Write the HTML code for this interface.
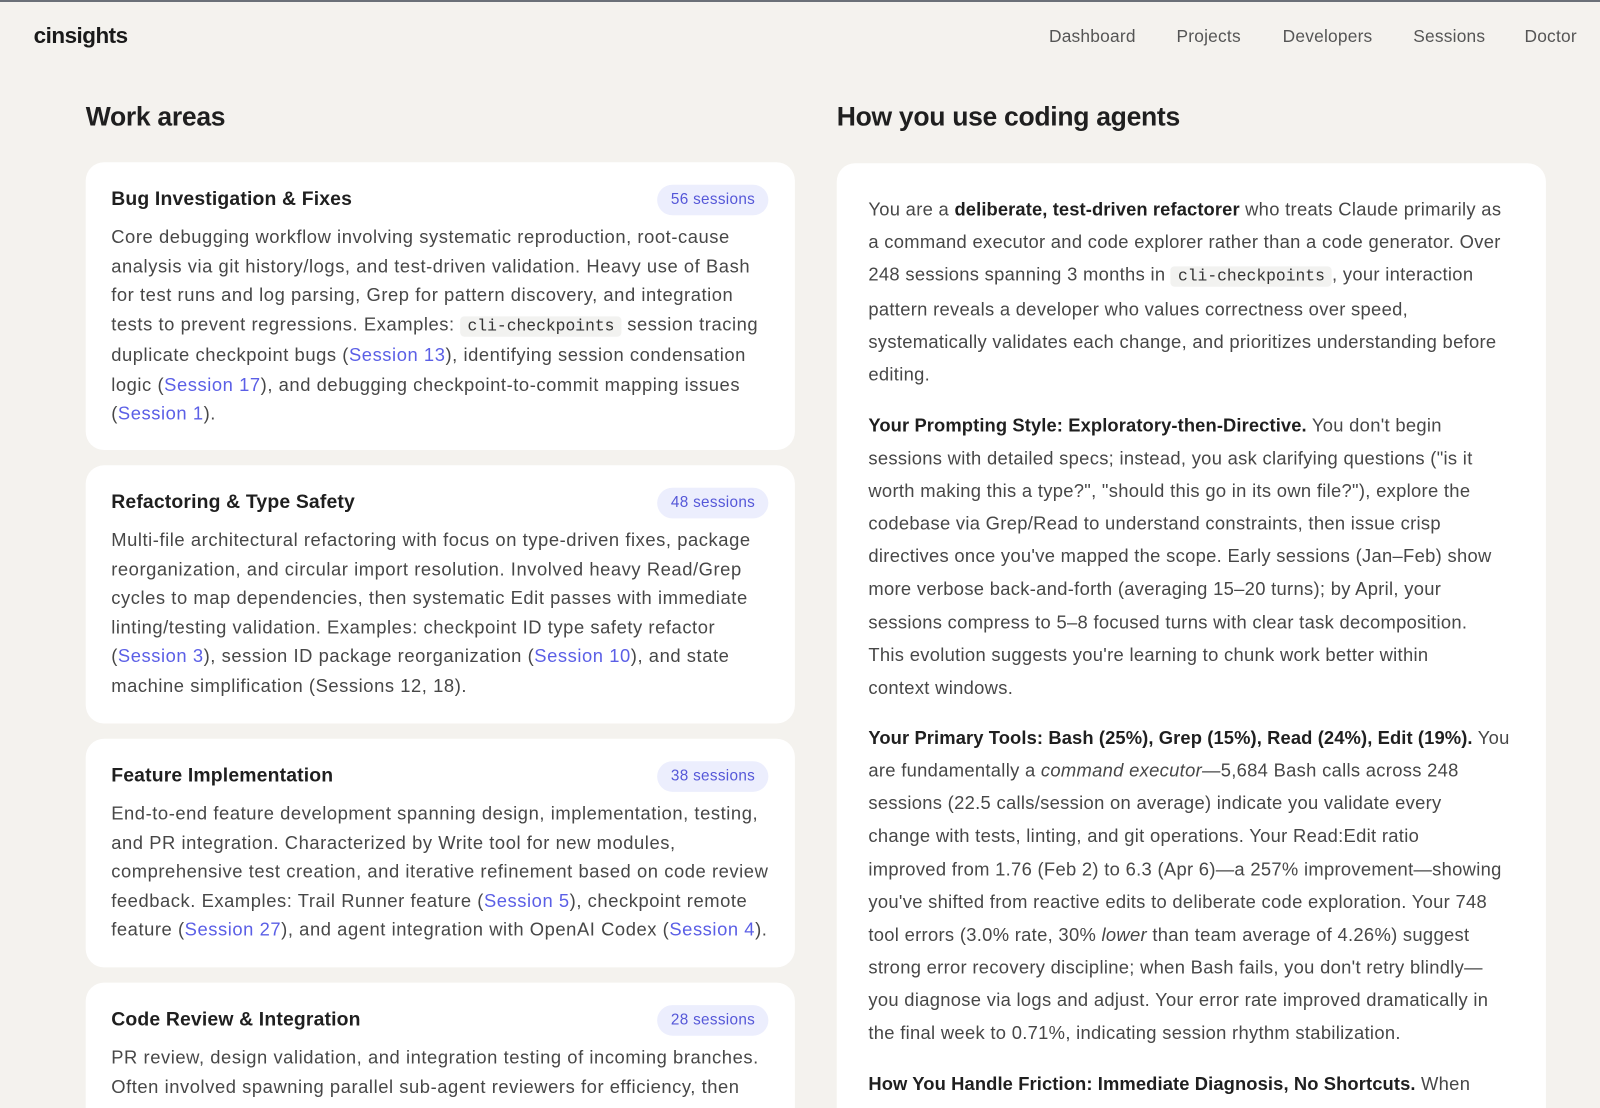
<!DOCTYPE html>
<html><head><meta charset="utf-8"><style>
*{box-sizing:border-box;margin:0;padding:0}
html,body{width:1600px;height:1108px;overflow:hidden}
body{background:#f4f2ee;font-family:"Liberation Sans",sans-serif;color:#1f1f1f;position:relative}
#bar{position:absolute;left:0;top:0;width:1600px;height:2px;background:#6b7078;z-index:2}
#w{position:absolute;left:0;top:0;width:1568px;height:1086px;overflow:hidden;transform:scale(1.0204);transform-origin:0 0}
.logo{position:absolute;left:33px;top:22px;font-size:22px;font-weight:bold;letter-spacing:-0.5px;color:#1a1a1a}
.nav{position:absolute;top:26px;font-size:17px;color:#555;letter-spacing:0.2px}
h2{position:absolute;font-size:26px;font-weight:bold;letter-spacing:-0.3px;color:#1f1f1f}
.card{position:absolute;background:#fff;border-radius:18px;left:84px;width:695px;padding:0 25px}
.card h3{position:absolute;left:25px;font-size:19px;font-weight:bold;color:#1f1f1f;letter-spacing:0.15px}
.badge{position:absolute;right:26px;height:30px;line-height:30px;padding:0 13px;border-radius:15px;background:#eceefd;color:#5557d8;font-size:15px;letter-spacing:0.3px}
.txt{position:absolute;left:25px;font-size:18px;line-height:28.5px;color:#474747;white-space:nowrap;letter-spacing:0.55px}
a{color:#5b5fe6;text-decoration:none}
code{font-family:"Liberation Mono",monospace;font-size:16px;background:#f2f2f0;border-radius:4px;padding:1px 7px;color:#333;letter-spacing:0}
.right{position:absolute;left:820px;top:160px;width:695px;height:960px;background:#fff;border-radius:18px}
.rt{position:absolute;left:31px;top:29px;font-size:18px;line-height:32.1px;color:#474747;white-space:nowrap;letter-spacing:0.3px}
.rt p{margin-bottom:17.4px}
.rt b{color:#1f1f1f;letter-spacing:0.1px}
</style></head><body><div id="bar"></div><div id="w">
<div class="logo">cinsights</div>
<div class="nav" style="left:1028px">Dashboard</div>
<div class="nav" style="left:1153px">Projects</div>
<div class="nav" style="left:1257px">Developers</div>
<div class="nav" style="left:1385px">Sessions</div>
<div class="nav" style="left:1494px">Doctor</div>

<h2 style="left:84px;top:99px">Work areas</h2>
<h2 style="left:820px;top:99px">How you use coding agents</h2>

<div class="card" style="top:159px;height:282px">
<h3 style="top:26px">Bug Investigation &amp; Fixes</h3><div class="badge" style="top:22px">56 sessions</div>
<div class="txt" style="top:59px">Core debugging workflow involving systematic reproduction, root-cause<br>analysis via git history/logs, and test-driven validation. Heavy use of Bash<br>for test runs and log parsing, Grep for pattern discovery, and integration<br>tests to prevent regressions. Examples: <code>cli-checkpoints</code> session tracing<br>duplicate checkpoint bugs (<a>Session 13</a>), identifying session condensation<br>logic (<a>Session 17</a>), and debugging checkpoint-to-commit mapping issues<br>(<a>Session 1</a>).</div>
</div>

<div class="card" style="top:456px;height:253px">
<h3 style="top:26px">Refactoring &amp; Type Safety</h3><div class="badge" style="top:22px">48 sessions</div>
<div class="txt" style="top:59px">Multi-file architectural refactoring with focus on type-driven fixes, package<br>reorganization, and circular import resolution. Involved heavy Read/Grep<br>cycles to map dependencies, then systematic Edit passes with immediate<br>linting/testing validation. Examples: checkpoint ID type safety refactor<br>(<a>Session 3</a>), session ID package reorganization (<a>Session 10</a>), and state<br>machine simplification (Sessions 12, 18).</div>
</div>

<div class="card" style="top:724px;height:224px">
<h3 style="top:26px">Feature Implementation</h3><div class="badge" style="top:22px">38 sessions</div>
<div class="txt" style="top:59px">End-to-end feature development spanning design, implementation, testing,<br>and PR integration. Characterized by Write tool for new modules,<br>comprehensive test creation, and iterative refinement based on code review<br>feedback. Examples: Trail Runner feature (<a>Session 5</a>), checkpoint remote<br>feature (<a>Session 27</a>), and agent integration with OpenAI Codex (<a>Session 4</a>).</div>
</div>

<div class="card" style="top:963px;height:200px">
<h3 style="top:26px">Code Review &amp; Integration</h3><div class="badge" style="top:22px">28 sessions</div>
<div class="txt" style="top:59px">PR review, design validation, and integration testing of incoming branches.<br>Often involved spawning parallel sub-agent reviewers for efficiency, then</div>
</div>

<div class="right"><div class="rt">
<p>You are a <b>deliberate, test-driven refactorer</b> who treats Claude primarily as<br>a command executor and code explorer rather than a code generator. Over<br>248 sessions spanning 3 months in <code>cli-checkpoints</code>, your interaction<br>pattern reveals a developer who values correctness over speed,<br>systematically validates each change, and prioritizes understanding before<br>editing.</p>
<p><b>Your Prompting Style: Exploratory-then-Directive.</b> You don't begin<br>sessions with detailed specs; instead, you ask clarifying questions ("is it<br>worth making this a type?", "should this go in its own file?"), explore the<br>codebase via Grep/Read to understand constraints, then issue crisp<br>directives once you've mapped the scope. Early sessions (Jan–Feb) show<br>more verbose back-and-forth (averaging 15–20 turns); by April, your<br>sessions compress to 5–8 focused turns with clear task decomposition.<br>This evolution suggests you're learning to chunk work better within<br>context windows.</p>
<p><b>Your Primary Tools: Bash (25%), Grep (15%), Read (24%), Edit (19%).</b> You<br>are fundamentally a <i>command executor</i>—5,684 Bash calls across 248<br>sessions (22.5 calls/session on average) indicate you validate every<br>change with tests, linting, and git operations. Your Read:Edit ratio<br>improved from 1.76 (Feb 2) to 6.3 (Apr 6)—a 257% improvement—showing<br>you've shifted from reactive edits to deliberate code exploration. Your 748<br>tool errors (3.0% rate, 30% <i>lower</i> than team average of 4.26%) suggest<br>strong error recovery discipline; when Bash fails, you don't retry blindly—<br>you diagnose via logs and adjust. Your error rate improved dramatically in<br>the final week to 0.71%, indicating session rhythm stabilization.</p>
<p><b>How You Handle Friction: Immediate Diagnosis, No Shortcuts.</b> When</p>
</div></div>
</div></body></html>
